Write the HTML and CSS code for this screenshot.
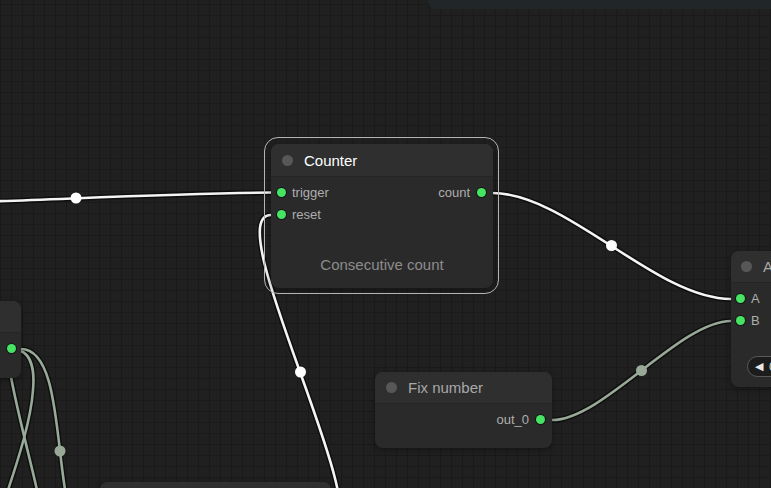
FILE: index.html
```html
<!DOCTYPE html>
<html lang="en">
<head>
    <meta charset="UTF-8" />
    <title>Graph editor</title>
    <link rel="stylesheet" href="styles.css">
</head>
<body>
    <div class="canvas">
        <div class="top-panel"></div>

        <!-- links -->
        <svg class="links" width="771" height="488" viewBox="0 0 771 488">
            <g class="link-shadow">
                <path d="M-10 201.5 C 90 198, 180 193.5, 272 192.5" />
                <path d="M492 193 C 567 193, 656 299, 731 299" />
                <path d="M329 529 C 384 529, 216 215, 271 215" />
                <path d="M552 420 C 603 420, 680 321, 731 321" />
                <path d="M21 349 C 76 349, 44 553, 99 553" />
                <path d="M21 351 C 30 355, 35 368, 33 390 C 31 420, 18 460, 8 490" />
                <path d="M8 360 C 14 400, 28 450, 37 490" />
            </g>
            <g class="link-white">
                <path d="M-10 201.5 C 90 198, 180 193.5, 272 192.5" />
                <path d="M492 193 C 567 193, 656 299, 731 299" />
                <path d="M329 529 C 384 529, 216 215, 271 215" />
            </g>
            <g class="link-number">
                <path d="M552 420 C 603 420, 680 321, 731 321" />
                <path d="M21 349 C 76 349, 44 553, 99 553" />
                <path d="M21 351 C 30 355, 35 368, 33 390 C 31 420, 18 460, 8 490" />
                <path d="M8 360 C 14 400, 28 450, 37 490" />
            </g>
            <circle class="mid-white" cx="76" cy="198" r="5.5" />
            <circle class="mid-white" cx="611.5" cy="245.5" r="5.5" />
            <circle class="mid-white" cx="300.5" cy="372" r="5.5" />
            <circle class="mid-number" cx="641.5" cy="370.5" r="5.5" />
            <circle class="mid-number" cx="60" cy="451" r="5.5" />
        </svg>

        <!-- left node (cut off) -->
        <div class="node node-left">
            <div class="node-title"></div>
            <div class="node-body">
                <div class="slot slot-out"><span class="dot"></span></div>
            </div>
        </div>

        <!-- Counter -->
        <div class="node node-counter selected">
            <div class="node-title">
                <span class="title-dot"></span>
                <span class="title-text">Counter</span>
            </div>
            <div class="node-body">
                <div class="slot-row">
                    <div class="slot"><span class="dot"></span>trigger</div>
                    <div class="slot slot-out">count<span class="dot"></span></div>
                </div>
                <div class="slot-row">
                    <div class="slot"><span class="dot"></span>reset</div>
                </div>
                <div class="node-footer">Consecutive count</div>
            </div>
        </div>

        <!-- Fix number -->
        <div class="node node-fix">
            <div class="node-title">
                <span class="title-dot"></span>
                <span class="title-text">Fix number</span>
            </div>
            <div class="node-body">
                <div class="slot-row">
                    <div class="slot slot-out">out_0<span class="dot"></span></div>
                </div>
            </div>
        </div>

        <!-- right node (cut off) -->
        <div class="node node-right">
            <div class="node-title">
                <span class="title-dot"></span>
                <span class="title-text">Add</span>
            </div>
            <div class="node-body">
                <div class="slot"><span class="dot"></span>A</div>
                <div class="slot"><span class="dot"></span>B</div>
                <div class="widget"><span class="arrow">&#9664;</span> 0</div>
            </div>
        </div>

        <!-- bottom node (cut off) -->
        <div class="node node-bottom">
            <div class="node-title"></div>
        </div>
    </div>
</body>
</html>
```

FILE: styles.css
```css
* {
    margin: 0;
    padding: 0;
    box-sizing: border-box;
}
body {
    font-family: 'Liberation Sans', Arial, sans-serif;
    background: #202020;
    overflow: hidden;
}
.canvas {
    position: relative;
    width: 771px;
    height: 488px;
    overflow: hidden;
    background-color: #202020;
    background-image:
        linear-gradient(#1a1a1a 1px, transparent 1px),
        linear-gradient(90deg, #1a1a1a 1px, transparent 1px);
    background-size: 11px 11px;
    background-position: 0 4px;
}
.top-panel {
    position: absolute;
    top: 0;
    left: 428px;
    right: 0;
    height: 9px;
    background: #212628;
    border-bottom-left-radius: 8px;
}
.links {
    position: absolute;
    top: 0;
    left: 0;
}
.links path {
    fill: none;
}
.link-shadow path {
    stroke: rgba(0, 0, 0, 0.55);
    stroke-width: 5.5;
}
.link-white path {
    stroke: #f4f4f4;
    stroke-width: 2.6;
}
.link-number path {
    stroke: #98a998;
    stroke-width: 2.6;
}
.mid-white {
    fill: #ffffff;
}
.mid-number {
    fill: #98a998;
}

/* Nodes */
.node {
    position: absolute;
    background: #2a2a2a;
    border-radius: 8px;
    box-shadow: 0 2px 6px rgba(0, 0, 0, 0.35);
    color: #aaaaaa;
    display: flex;
    flex-direction: column;
}
.node-title {
    height: 33px;
    display: flex;
    align-items: center;
    gap: 11px;
    padding-left: 11px;
    background: #2f2f2f;
    border-bottom: 1px solid #252525;
    border-radius: 8px 8px 0 0;
    font-size: 15px;
    color: #a8a8a8;
    white-space: nowrap;
}
.title-dot {
    width: 11px;
    height: 11px;
    border-radius: 50%;
    background: #575757;
    flex-shrink: 0;
}
.node-body {
    flex: 1;
    display: flex;
    flex-direction: column;
    padding: 4px 0 0;
}
.slot-row {
    display: flex;
    justify-content: space-between;
}
.slot {
    height: 22px;
    display: flex;
    align-items: center;
    gap: 6px;
    padding: 0 6px;
    font-size: 13px;
    color: #aeaeae;
}
.slot-out {
    margin-left: auto;
    gap: 7px;
    padding-right: 7px;
}
.dot {
    width: 9px;
    height: 9px;
    border-radius: 50%;
    background: #45e463;
    box-shadow: 0 0 0 1px #161616;
    flex-shrink: 0;
}
.node-footer {
    margin-top: auto;
    padding-bottom: 14px;
    text-align: center;
    font-size: 15px;
    line-height: 18px;
    color: #8c8c8c;
}

.node-counter {
    left: 271px;
    top: 144px;
    width: 222px;
    height: 144px;
}
.node-counter .title-text {
    color: #ffffff;
}
.selected::before {
    content: "";
    position: absolute;
    inset: -7px -6px -6px -7px;
    border: 1.5px solid #b4b4b4;
    border-radius: 14px;
    pointer-events: none;
}

.node-fix {
    left: 375px;
    top: 372px;
    width: 177px;
    height: 76px;
}
.node-fix .node-title {
    height: 32px;
}

.node-right {
    left: 731px;
    top: 251px;
    width: 100px;
    height: 136px;
}
.node-right .node-title {
    height: 32px;
    padding-left: 10px;
}
.node-right .slot {
    padding-left: 5px;
}
.widget {
    margin: 25px 0 0 16px;
    height: 21px;
    width: 80px;
    border: 1px solid #5a5a5a;
    border-radius: 11px;
    background: #1c1c1c;
    display: flex;
    align-items: center;
    gap: 6px;
    padding-left: 7px;
    font-size: 13px;
    color: #cccccc;
}
.arrow {
    font-size: 11px;
    color: #e8e8e8;
}

.node-left {
    left: -60px;
    top: 301px;
    width: 81px;
    height: 77px;
}
.node-left .node-title {
    height: 32px;
}
.node-left .slot {
    padding-right: 5px;
}

.node-bottom {
    left: 100px;
    top: 482px;
    width: 231px;
    height: 60px;
}
```
